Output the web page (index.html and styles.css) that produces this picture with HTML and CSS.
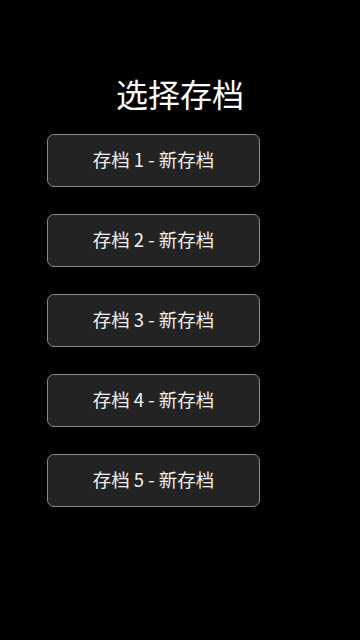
FILE: index.html
```html
<!DOCTYPE html>
<html lang="zh">
<head>
<meta charset="utf-8">
<link rel="stylesheet" href="styles.css">
</head>
<body>
<div class="screen">
  <h1 class="title">选择存档</h1>
  <div class="slots">
    <button class="slot">存档 1 - 新存档</button>
    <button class="slot">存档 2 - 新存档</button>
    <button class="slot">存档 3 - 新存档</button>
    <button class="slot">存档 4 - 新存档</button>
    <button class="slot">存档 5 - 新存档</button>
  </div>
</div>
</body>
</html>
```
FILE: styles.css
```css
html, body {
  margin: 0;
  padding: 0;
  background: #000;
}
.screen {
  width: 360px;
  height: 640px;
  background: #000;
  font-family: "Noto Sans CJK SC", "Noto Sans", sans-serif;
  color: #fff;
  display: flex;
  flex-direction: column;
  align-items: center;
}
.title {
  margin: 71px 0 0 0;
  font-size: 32px;
  font-weight: 400;
  line-height: 44px;
  text-align: center;
}
.slots {
  margin-top: 19px;
  align-self: flex-start;
  margin-left: 47px;
  display: flex;
  flex-direction: column;
  gap: 27px;
}
.slot {
  width: 213px;
  height: 53px;
  box-sizing: border-box;
  background: #232323;
  border: 1px solid #8a8a8a;
  border-radius: 7px;
  color: #f0f0f0;
  font-family: "Noto Sans CJK SC", "Noto Sans", sans-serif;
  font-size: 18.5px;
  padding: 0 0 3px 0;
}
```
